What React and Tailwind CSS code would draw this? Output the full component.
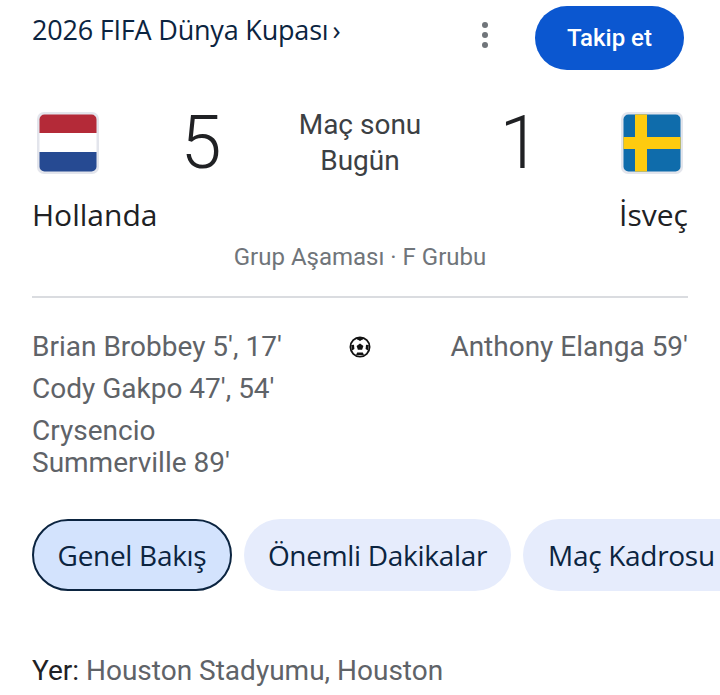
function Flag({ id, className, children }) {
  return (
    <div className={"w-[64px] h-[64px] shrink-0 " + className}>
      <svg width="64" height="64" viewBox="0 0 64 64">
        <rect x="1" y="1" width="62" height="62" rx="7" fill="#e3e5ec" />
        <defs>
          <clipPath id={id}><rect x="3.5" y="3.5" width="57" height="57" rx="5" /></clipPath>
        </defs>
        <g clipPath={`url(#${id})`}>{children}</g>
      </svg>
    </div>
  );
}

function Ball() {
  return (
    <svg width="24" height="24" viewBox="0 0 24 24" className="shrink-0">
      <circle cx="12" cy="12" r="9.6" fill="#fff" stroke="#111" strokeWidth="1.8" />
      <polygon points="12,8.4 15.4,10.9 14.1,14.8 9.9,14.8 8.6,10.9" fill="#111" />
      <path d="M8.6 3.6 12 5.4l3.4-1.8z" fill="#111" stroke="#111" strokeWidth="1" />
      <path d="M3.2 10 6 9.8 6.4 14 4 15.4z" fill="#111" />
      <path d="M20.8 10 18 9.8 17.6 14 20 15.4z" fill="#111" />
      <path d="M8 20 9.2 17.6 14.8 17.6 16 20z" fill="#111" />
    </svg>
  );
}

export default function App() {
  return (
    <div className="w-[720px] h-[695px] overflow-hidden bg-white font-['Roboto',sans-serif]">
      <div className="flex items-start pl-[32px] pr-[36px] pt-[7px]">
        <div className="flex-1 flex items-center h-[46px] text-[#0b2440] text-[27px] font-['Open_Sans',sans-serif] tracking-[-0.2px]">
          <span>2026 FIFA Dünya Kupası</span>
          <span className="ml-[4px]">›</span>
        </div>
        <div className="w-[8px] h-[26px] mt-[15px] mr-[46px] flex flex-col justify-between items-center">
          <span className="w-[6px] h-[6px] rounded-full bg-[#70757a]" />
          <span className="w-[6px] h-[6px] rounded-full bg-[#70757a]" />
          <span className="w-[6px] h-[6px] rounded-full bg-[#70757a]" />
        </div>
        <div className="w-[149px] h-[64px] -mt-[1px] rounded-full bg-[#0b57d0] text-white text-[24px] font-medium flex items-center justify-center">
          Takip et
        </div>
      </div>

      <div className="px-[32px] pt-[41px]">
        <div className="flex items-start h-[64px]">
          <Flag id="nl" className="ml-[4px]">
            <rect x="0" y="0" width="64" height="22" fill="#b42a38" />
            <rect x="0" y="22" width="64" height="19" fill="#ffffff" />
            <rect x="0" y="41" width="64" height="23" fill="#264a92" />
          </Flag>
          <div className="w-[180px] text-center text-[74px] leading-[64px] text-[#202124] font-light pl-[22px]">5</div>
          <div className="flex-1 text-center text-[28px] leading-[36px] text-[#3c4043] -mt-[4px]">
            <div>Maç sonu</div>
            <div>Bugün</div>
          </div>
          <div className="w-[180px] text-center text-[74px] leading-[64px] text-[#202124] font-light pr-[20px]">1</div>
          <Flag id="se" className="mr-[4px]">
            <rect x="0" y="0" width="64" height="64" fill="#0f6cab" />
            <rect x="15" y="0" width="12" height="64" fill="#fecb0f" />
            <rect x="0" y="26" width="64" height="12" fill="#fecb0f" />
          </Flag>
        </div>
        <div className="flex justify-between mt-[20px] text-[#202124] text-[30px] leading-[40px] font-['Open_Sans',sans-serif]">
          <span>Hollanda</span>
          <span>İsveç</span>
        </div>
        <div className="text-center text-[24px] leading-[32px] text-[#70757a] mt-[6px]">Grup Aşaması · F Grubu</div>
        <div className="h-[2px] bg-[#dadce0] mt-[23px]" />
        <div className="flex mt-[33px] text-[28px] leading-[32px] text-[#5f6368]">
          <div className="w-[260px]">
            <div className="mb-[10px]">Brian Brobbey 5', 17'</div>
            <div className="mb-[10px]">Cody Gakpo 47', 54'</div>
            <div>Crysencio<br />Summerville 89'</div>
          </div>
          <div className="w-[136px] flex justify-center pt-[4px]"><Ball /></div>
          <div className="flex-1 text-right">Anthony Elanga 59'</div>
        </div>
      </div>

      <div className="flex gap-[12px] pl-[32px] mt-[40px] whitespace-nowrap font-['Open_Sans',sans-serif] text-[28px] tracking-[-0.3px] text-[#0b2440] font-medium">
        <div className="w-[200px] h-[72px] shrink-0 rounded-full bg-[#d3e3fd] border-2 border-[#0b2440] flex items-center justify-center">Genel Bakış</div>
        <div className="w-[267px] h-[72px] shrink-0 rounded-full bg-[#e6ecfc] flex items-center justify-center">Önemli Dakikalar</div>
        <div className="h-[72px] shrink-0 w-[240px] pl-[25px] rounded-full bg-[#e6ecfc] flex items-center">Maç Kadrosu</div>
      </div>

      <div className="pl-[32px] mt-[62px] text-[28px] leading-[36px] text-[#5f6368]">
        <span className="text-[#202124]">Yer:</span> Houston Stadyumu, Houston
      </div>
    </div>
  );
}
